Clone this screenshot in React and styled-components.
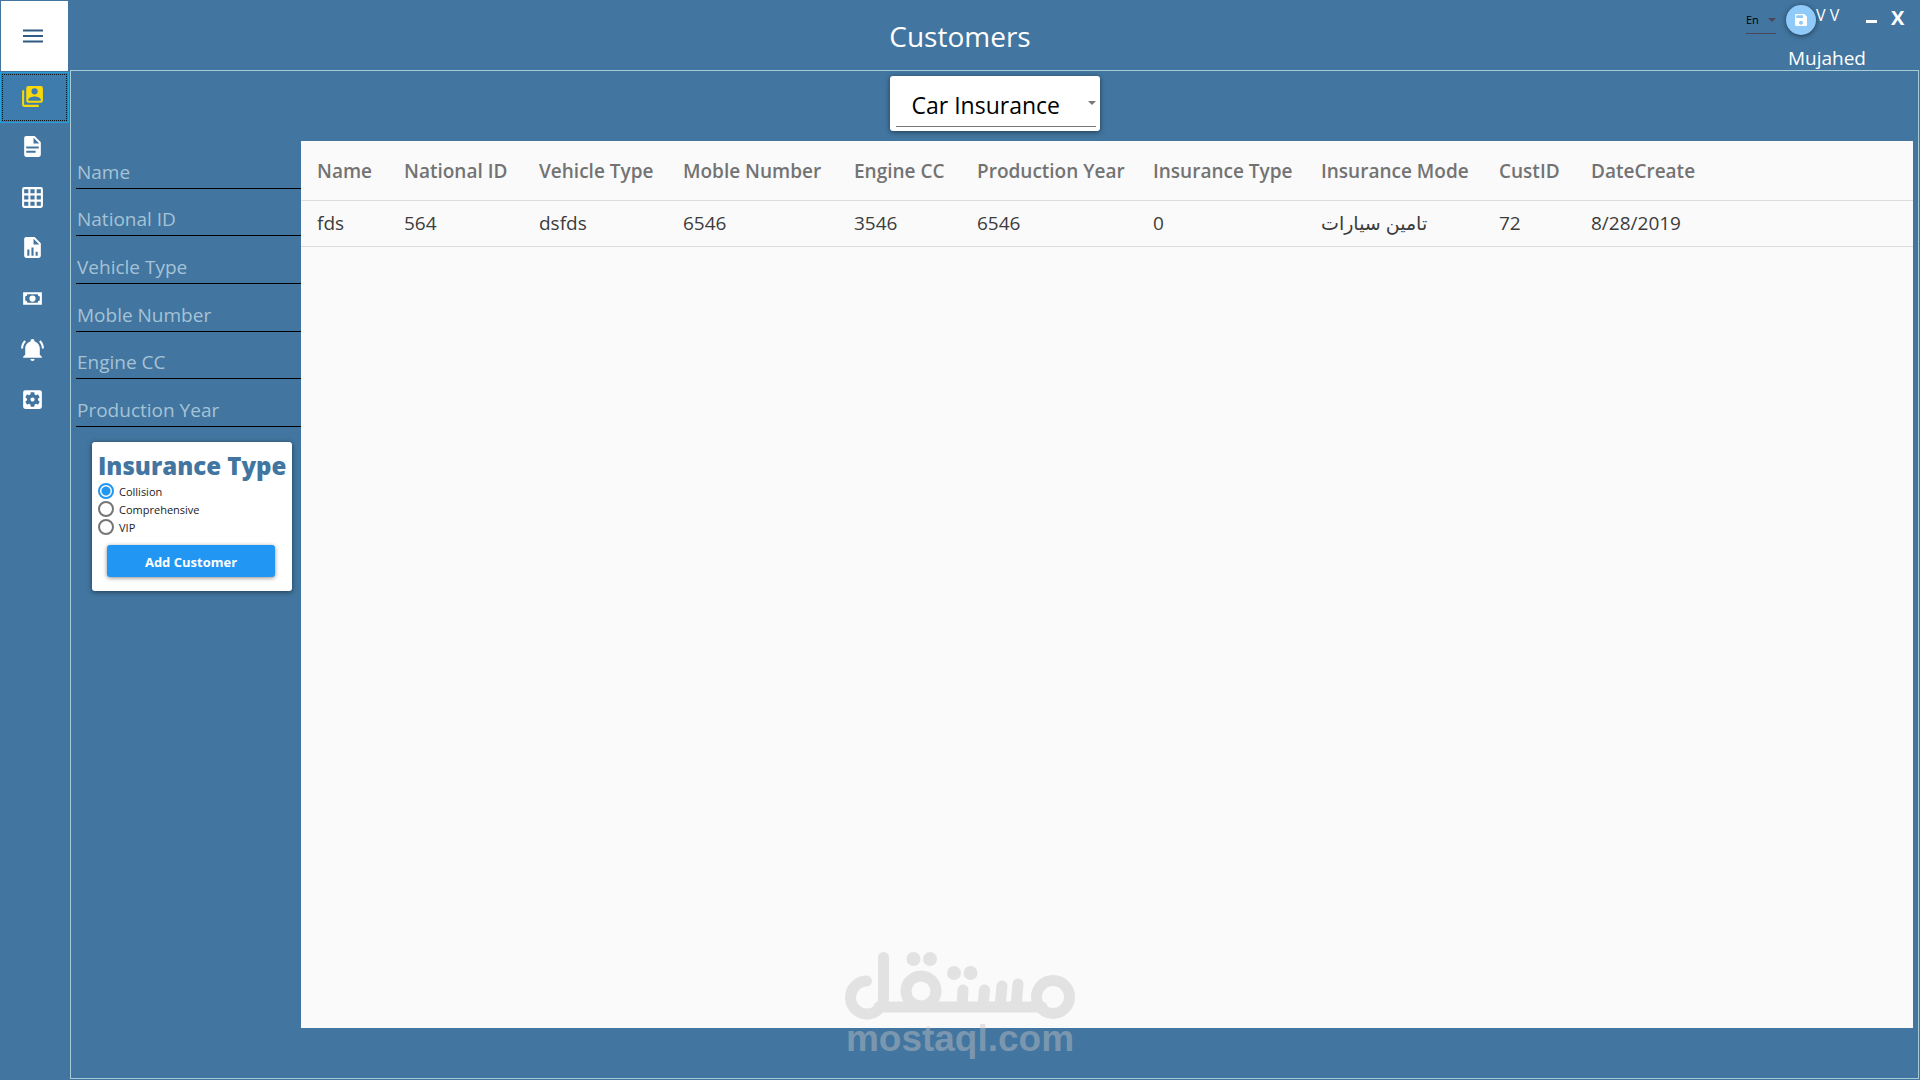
import React, { useState } from "react";
import styled, { createGlobalStyle } from "styled-components";
import { MdSave, MdSettingsApplications } from "react-icons/md";

const GlobalStyle = createGlobalStyle`
  *, *::before, *::after { box-sizing: border-box; }
  body {
    margin: 0;
    background: #42759f;
    font-family: "Open Sans", "Noto Sans", "DejaVu Sans", sans-serif;
  }
  button, input, select { font: inherit; }
`;

const Page = styled.div`
  position: relative;
  display: flex;
  flex-direction: column;
  min-height: 100vh;
  background: #42759f;
`;

const Header = styled.header`
  display: grid;
  grid-template-columns: 1fr auto 1fr;
  height: 70px;
`;

const MenuButton = styled.button`
  display: flex;
  align-items: center;
  justify-content: center;
  width: 67px;
  height: 70px;
  margin: 1px;
  padding: 0 4px 0 0;
  border: 0;
  background: #fff;
  color: #2f5a85;
`;

const Title = styled.h1`
  margin: 0;
  padding-top: 16px;
  color: #fff;
  font-size: 28px;
  font-weight: 400;
  line-height: 40px;
`;

const HeaderTools = styled.div`
  display: flex;
  flex-direction: column;
  align-items: flex-end;
  padding-right: 16px;
`;

const ToolRow = styled.div`
  display: flex;
  align-items: flex-start;
  height: 46px;
  padding-top: 4px;
`;

const SelectBox = styled.label`
  position: relative;
  display: block;
  color: ${(p) => p.$arrow};
`;

const LanguageBox = styled(SelectBox)`
  width: 30px;
  height: 30px;
  margin-right: 10px;
  border-bottom: 1px solid #4b4658;

  select { padding-top: 2px; }
`;

const Select = styled.select`
  width: 100%;
  height: 100%;
  padding: 0;
  border: 0;
  background: transparent;
  appearance: none;
  color: #000;
  font-size: ${(p) => p.$size};
`;

const Arrow = styled.svg`
  position: absolute;
  right: 0;
  top: ${(p) => p.$top};
  width: 8px;
  height: 4px;
  pointer-events: none;
`;

const SaveButton = styled.button`
  display: flex;
  align-items: center;
  justify-content: center;
  width: 30px;
  height: 30px;
  margin-top: 1px;
  padding: 0;
  border: 0;
  border-radius: 50%;
  background: #90caf9;
  color: #fff;
  box-shadow: 0 1px 5px rgba(0, 0, 0, 0.5);
`;

const Version = styled.span`
  width: 50px;
  color: #fff;
  font-size: 16px;
  line-height: 22px;
`;

const WindowButton = styled.button`
  width: 13px;
  height: 24px;
  margin-left: ${(p) => p.$gap};
  padding: 0;
  border: 0;
  background: transparent;
  color: #fff;
  font-size: 20px;
  font-weight: 700;
  line-height: 28px;
`;

const MinimizeMark = styled.span`
  display: block;
  width: 11px;
  height: 3px;
  margin-top: 10px;
  background: #fff;
`;

const UserName = styled.span`
  padding-right: 38px;
  color: #fff;
  font-size: 19px;
  line-height: 24px;
`;

const Main = styled.div`
  display: flex;
  flex: 1;
`;

const Sidebar = styled.nav`
  display: grid;
  grid-auto-rows: 1fr;
  flex: none;
  width: 69px;
  height: 354px;
  margin: 2px 1px 0 0;
`;

const NavButton = styled.button`
  display: flex;
  align-items: center;
  justify-content: center;
  padding: 0 4px 2px 0;
  border: 1px solid ${(p) => (p.$active ? "#26a0da" : "transparent")};
  background: ${(p) => (p.$active ? "#3d7cac" : "transparent")};
  color: ${(p) => (p.$active ? "#f9d80b" : "#fff")};
  outline: ${(p) => (p.$active ? "1px dotted #111" : "none")};
  outline-offset: -3px;
`;

const Frame = styled.main`
  display: flex;
  flex: 1;
  flex-direction: column;
  min-width: 0;
  margin: 0 1px 1px 0;
  padding: 5px 5px 50px;
  border: 1px solid #a8ccd6;
`;

const ModeCard = styled.div`
  align-self: center;
  width: 210px;
  height: 55px;
  margin-bottom: 10px;
  padding: 5px 4px 4px 6px;
  border-radius: 3px;
  background: #fff;
  box-shadow: 0 1px 5px rgba(0, 0, 0, 0.5);
`;

const ModeBox = styled(SelectBox)`
  height: 46px;
  border-bottom: 1px solid #777;

  select { padding: 2px 0 0 16px; }
`;

const Content = styled.div`
  display: grid;
  grid-template-columns: 225px minmax(0, 1fr);
  flex: 1;
`;

const Fields = styled.div`
  display: grid;
  grid-auto-rows: 1fr;
  height: 286px;
`;

const Field = styled.input`
  width: 100%;
  min-width: 0;
  padding: 17px 1px 2px;
  border: 0;
  border-bottom: 1px solid #000;
  outline: 0;
  background: transparent;
  color: #fff;
  font-size: 19px;

  &::placeholder { color: #a5c3d6; opacity: 1; }
`;

const TypeCard = styled.fieldset`
  width: 198px;
  height: 149px;
  margin: 15px 0 0 16px;
  padding: 0 6px;
  border: 0;
  border-radius: 3px;
  background: #fff;
  box-shadow: 0 1px 5px rgba(0, 0, 0, 0.5);
`;

const TypeTitle = styled.h2`
  margin: 0;
  padding-top: 8px;
  color: #42759f;
  font-size: 24px;
  font-weight: 800;
  line-height: 32px;
  white-space: nowrap;
`;

const RadioLabel = styled.label`
  display: flex;
  align-items: center;
  gap: 5px;
  height: 18px;
  color: #222;
  font-size: 11px;
`;

const Radio = styled.input`
  width: 16px;
  height: 16px;
  margin: 0;
  appearance: none;
  border: 2px solid #757575;
  border-radius: 50%;

  &:checked {
    border-color: #2196f3;
    background: radial-gradient(circle, #2196f3 4px, #fff 5px);
  }
`;

const AddButton = styled.button`
  display: block;
  width: 168px;
  height: 32px;
  margin: 9px 0 0 9px;
  padding: 2px 0 0;
  border: 0;
  border-radius: 3px;
  background: #2196f3;
  color: #fff;
  font-size: 13px;
  font-weight: 700;
  box-shadow: 0 1px 4px rgba(0, 0, 0, 0.45);
`;

const TablePanel = styled.section`
  background: #fafafa;
`;

const Table = styled.table`
  width: 100%;
  table-layout: fixed;
  border-collapse: collapse;
  color: #3c3c3c;
  font-size: 19px;
  text-align: left;
  white-space: nowrap;

  tr { border-bottom: 1px solid #dcdcdc; }
  th { height: 59px; padding: 2px 0 0 16px; color: #737373; font-weight: 600; }
  td { height: 46px; padding: 0 0 0 16px; }
`;

const Watermark = styled.div`
  position: absolute;
  bottom: 22px;
  left: 50%;
  display: flex;
  flex-direction: column;
  align-items: center;
  width: 230px;
  margin-left: -115px;
  opacity: 0.43;
  color: #c4c4c4;
  font-family: "Liberation Sans", sans-serif;
  font-size: 37px;
  font-weight: 700;
  line-height: 38px;
  pointer-events: none;
`;

const ICONS = {
  accounts:
    "M4,6H2V20A2,2 0 0,0 4,22H18V20H4V6M20,2H8A2,2 0 0,0 6,4V16A2,2 0 0,0 8,18H20A2,2 0 0,0 22,16V4A2,2 0 0,0 20,2M17,7A3,3 0 0,1 14,10A3,3 0 0,1 11,7A3,3 0 0,1 14,4A3,3 0 0,1 17,7M8,15C8,13 12,11.9 14,11.9C16,11.9 20,13 20,15V16H8V15Z",
  document:
    "M13,9H18.5L13,3.5V9M6,2H14L20,8V20A2,2 0 0,1 18,22H6C4.89,22 4,21.1 4,20V4C4,2.89 4.89,2 6,2M15,18V16H6V18H15M18,14V12H6V14H18Z",
  grid:
    "M10,4V8H14V4H10M16,4V8H20V4H16M16,10V14H20V10H16M16,16V20H20V16H16M14,20V16H10V20H14M8,20V16H4V20H8M8,14V10H4V14H8M8,8V4H4V8H8M10,14H14V10H10V14M4,2H20A2,2 0 0,1 22,4V20A2,2 0 0,1 20,22H4C2.92,22 2,21.1 2,20V4A2,2 0 0,1 4,2Z",
  chart:
    "M13,9H18.5L13,3.5V9M6,2H14L20,8V20A2,2 0 0,1 18,22H6C4.89,22 4,21.1 4,20V4C4,2.89 4.89,2 6,2M7,20H9V14H7V20M11,20H13V12H11V20M15,20H17V16H15V20Z",
  cash:
    "M3,6H21V18H3V6M12,9A3,3 0 0,1 15,12A3,3 0 0,1 12,15A3,3 0 0,1 9,12A3,3 0 0,1 12,9M7,8A2,2 0 0,1 5,10V14A2,2 0 0,1 7,16H17A2,2 0 0,1 19,14V10A2,2 0 0,1 17,8H7Z",
  bell:
    "M21,19V20H3V19L5,17V11C5,7.9 7.03,5.17 10,4.29C10,4.19 10,4.1 10,4A2,2 0 0,1 12,2A2,2 0 0,1 14,4C14,4.1 14,4.19 14,4.29C16.97,5.17 19,7.9 19,11V17L21,19M14,21A2,2 0 0,1 12,23A2,2 0 0,1 10,21M19.75,3.19L18.33,4.61C20.04,6.3 21,8.6 21,11H23C23,8.07 21.84,5.25 19.75,3.19M1,11H3C3,8.6 3.96,6.3 5.67,4.61L4.25,3.19C2.16,5.25 1,8.07 1,11Z",
};

function Icon({ path }) {
  return (
    <svg width="25" height="25" viewBox="0 0 24 24" fill="currentColor" fillRule="evenodd" aria-hidden="true">
      <path d={path} />
    </svg>
  );
}

function DownArrow({ top }) {
  return (
    <Arrow $top={top} viewBox="0 0 8 4" aria-hidden="true">
      <path d="M0 0h8L4 4z" fill="currentColor" />
    </Arrow>
  );
}

function WatermarkLogo() {
  return (
    <svg width="230" height="68" viewBox="0 0 230 68" fill="none" stroke="currentColor" strokeWidth="11" strokeLinecap="round" aria-hidden="true">
      <path d="M21.5 29A16.5 16.5 0 1 0 38.5 46V5.500M34 55H197" />
      <circle cx="76" cy="39" r="15" />
      <circle cx="208" cy="45" r="16.500" />
      <path d="M117 54l1-16M138 54l1.500-16M155 54l2-20M171 54l2-22" />
      <g fill="currentColor" stroke="none">
        <circle cx="68.500" cy="7" r="7" />
        <circle cx="85" cy="7" r="7" />
        <circle cx="109" cy="21" r="7" />
        <circle cx="125.500" cy="21" r="7" />
      </g>
    </svg>
  );
}

const NAV = [
  ["Customers", "accounts"],
  ["Documents", "document"],
  ["Tables", "grid"],
  ["Reports", "chart"],
  ["Payments", "cash"],
  ["Notifications", "bell"],
  ["Settings", "settings"],
];

const FIELDS = ["Name", "National ID", "Vehicle Type", "Moble Number", "Engine CC", "Production Year"];
const TYPES = ["Collision", "Comprehensive", "VIP"];

const COLUMNS = [
  ["Name", 87],
  ["National ID", 135],
  ["Vehicle Type", 144],
  ["Moble Number", 171],
  ["Engine CC", 123],
  ["Production Year", 176],
  ["Insurance Type", 168],
  ["Insurance Mode", 178],
  ["CustID", 92],
  ["DateCreate", undefined],
];

const ROWS = [["fds", "564", "dsfds", "6546", "3546", "6546", "0", "تامين سيارات", "72", "8/28/2019"]];

export default function App() {
  const [active, setActive] = useState("Customers");
  const [type, setType] = useState("Collision");

  return (
    <Page>
      <GlobalStyle />
      <Header>
        <MenuButton aria-label="Menu">
          <svg width="20" height="14" viewBox="0 0 20 14" stroke="currentColor" strokeWidth="2" aria-hidden="true">
            <path d="M0 1.500h20M0 7h20M0 12.500h20" />
          </svg>
        </MenuButton>
        <Title>Customers</Title>
        <HeaderTools>
          <ToolRow>
            <LanguageBox $arrow="#4b4658">
              <Select $size="11px" aria-label="Language">
                <option>En</option>
              </Select>
              <DownArrow top="14px" />
            </LanguageBox>
            <SaveButton aria-label="Save">
              <MdSave size={16} />
            </SaveButton>
            <Version>V V</Version>
            <WindowButton $gap="0" aria-label="Minimize">
              <MinimizeMark />
            </WindowButton>
            <WindowButton $gap="12px" aria-label="Close">X</WindowButton>
          </ToolRow>
          <UserName>Mujahed</UserName>
        </HeaderTools>
      </Header>
      <Main>
        <Sidebar>
          {NAV.map(([name, icon]) => (
            <NavButton key={name} aria-label={name} $active={name === active} onClick={() => setActive(name)}>
              {icon === "settings" ? <MdSettingsApplications size={25} /> : <Icon path={ICONS[icon]} />}
            </NavButton>
          ))}
        </Sidebar>
        <Frame>
          <ModeCard>
            <ModeBox $arrow="#777">
              <Select $size="23px" aria-label="Insurance mode">
                <option>Car Insurance</option>
              </Select>
              <DownArrow top="20px" />
            </ModeBox>
          </ModeCard>
          <Content>
            <div>
              <Fields>
                {FIELDS.map((name) => (
                  <Field key={name} placeholder={name} aria-label={name} />
                ))}
              </Fields>
              <TypeCard>
                <TypeTitle>Insurance Type</TypeTitle>
                {TYPES.map((name) => (
                  <RadioLabel key={name}>
                    <Radio type="radio" name="insurance-type" checked={type === name} onChange={() => setType(name)} />
                    {name}
                  </RadioLabel>
                ))}
                <AddButton>Add Customer</AddButton>
              </TypeCard>
            </div>
            <TablePanel>
              <Table>
                <colgroup>
                  {COLUMNS.map(([name, width]) => (
                    <col key={name} width={width} />
                  ))}
                </colgroup>
                <thead>
                  <tr>
                    {COLUMNS.map(([name]) => (
                      <th key={name}>{name}</th>
                    ))}
                  </tr>
                </thead>
                <tbody>
                  {ROWS.map((row) => (
                    <tr key={row[8]}>
                      {row.map((value, i) => (
                        <td key={COLUMNS[i][0]}>{value}</td>
                      ))}
                    </tr>
                  ))}
                </tbody>
              </Table>
            </TablePanel>
          </Content>
        </Frame>
      </Main>
      <Watermark>
        <WatermarkLogo />
        <span>mostaql.com</span>
      </Watermark>
    </Page>
  );
}
